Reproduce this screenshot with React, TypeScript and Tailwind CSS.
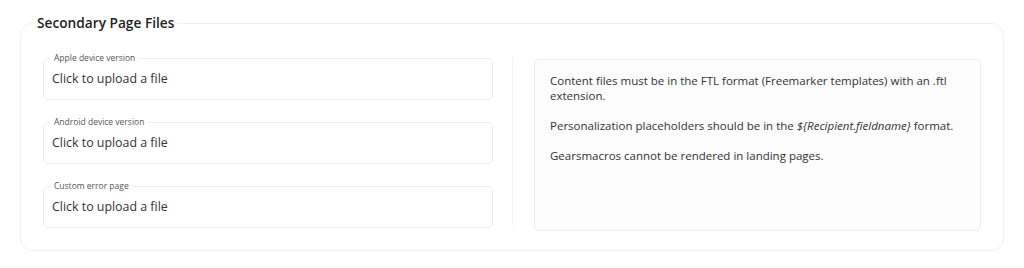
import React from 'react';

const uploads = ['Apple device version', 'Android device version', 'Custom error page'];

const UploadField: React.FC<{ label: string }> = ({ label }) => {
  return (
    <fieldset className="rounded-[5px] border border-[#ececec] bg-white">
      <legend className="ml-[6px] px-[4px] text-[8.5px] leading-[10px] text-[#555555]">{label}</legend>
      <div className="pl-[8px] pt-[8px] pb-[12px] text-[12.4px] leading-[16px] text-[#333333] cursor-pointer">
        Click to upload a file
      </div>
    </fieldset>
  );
};

export default function App() {
  return (
    <div className="min-h-[268px] bg-white pt-[14px] font-['Open_Sans',sans-serif]">
      <fieldset className="ml-[20px] w-[984px] rounded-[12px] border border-[#f0f0f0]">
        <legend className="ml-[13px] px-[3px] text-[13.7px] leading-[18px] font-semibold text-[#1f1f1f]">
          Secondary Page Files
        </legend>

        <div className="flex items-start px-[22px] pt-[21px] pb-[19px]">
          {/* upload fields */}
          <div className="flex w-[450px] flex-col gap-[17px]">
            {uploads.map((u) => (
              <UploadField key={u} label={u} />
            ))}
          </div>

          <div className="ml-[19px] mt-[4px] h-[169px] w-px bg-[#f2f2f2]" />

          {/* info box */}
          <div className="ml-[21px] mt-[6px] h-[172px] flex-1 rounded-[4px] border border-[#ececec] bg-[#fcfcfd] pl-[15px] pr-[12px] pt-[13px] text-[11.5px] leading-[15px] text-[#333333]">
            <p>Content files must be in the FTL format (Freemarker templates) with an .ftl extension.</p>
            <p className="mt-[15px]">
              Personalization placeholders should be in the <i>{'${Recipient.fieldname}'}</i> format.
            </p>
            <p className="mt-[15px]">Gearsmacros cannot be rendered in landing pages.</p>
          </div>
        </div>
      </fieldset>
    </div>
  );
}
